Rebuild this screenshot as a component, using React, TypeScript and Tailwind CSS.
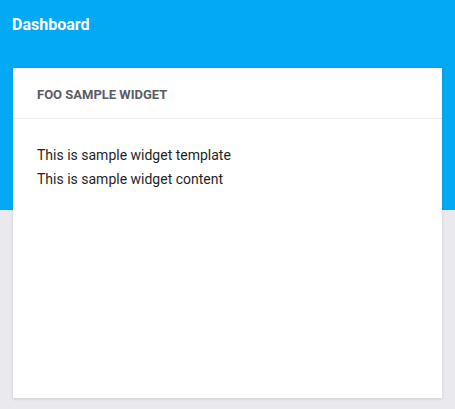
import React from 'react';

const Widget: React.FC<{ title: string; lines: string[] }> = ({ title, lines }) => {
  return <div className="bg-white h-[330px] shadow-[0_1px_3px_rgba(0,0,0,0.12)]">
      <div className="h-[51px] flex items-center px-6 pt-1 border-b border-[#ececec]">
        <span className="text-[13px] font-bold uppercase text-[#5b5b66]">{title}</span>
      </div>
      <div className="px-6 pt-6">
        {lines.map(line => <p key={line} className="text-[14px] leading-6 text-[#1f1f1f]">{line}</p>)}
      </div>
    </div>;
};

export default function App() {
  return <div className="min-h-[409px] bg-[#e9e9ee] font-['Roboto',sans-serif]">
      <div className="h-[210px] bg-[#03a9f4] px-3 pt-[15px]">
        <h1 className="text-white font-bold text-[16px] leading-5">Dashboard</h1>
      </div>
      <div className="mx-[13px] -mt-[142px]">
        <Widget title="Foo sample widget" lines={['This is sample widget template', 'This is sample widget content']} />
      </div>
    </div>;
}
